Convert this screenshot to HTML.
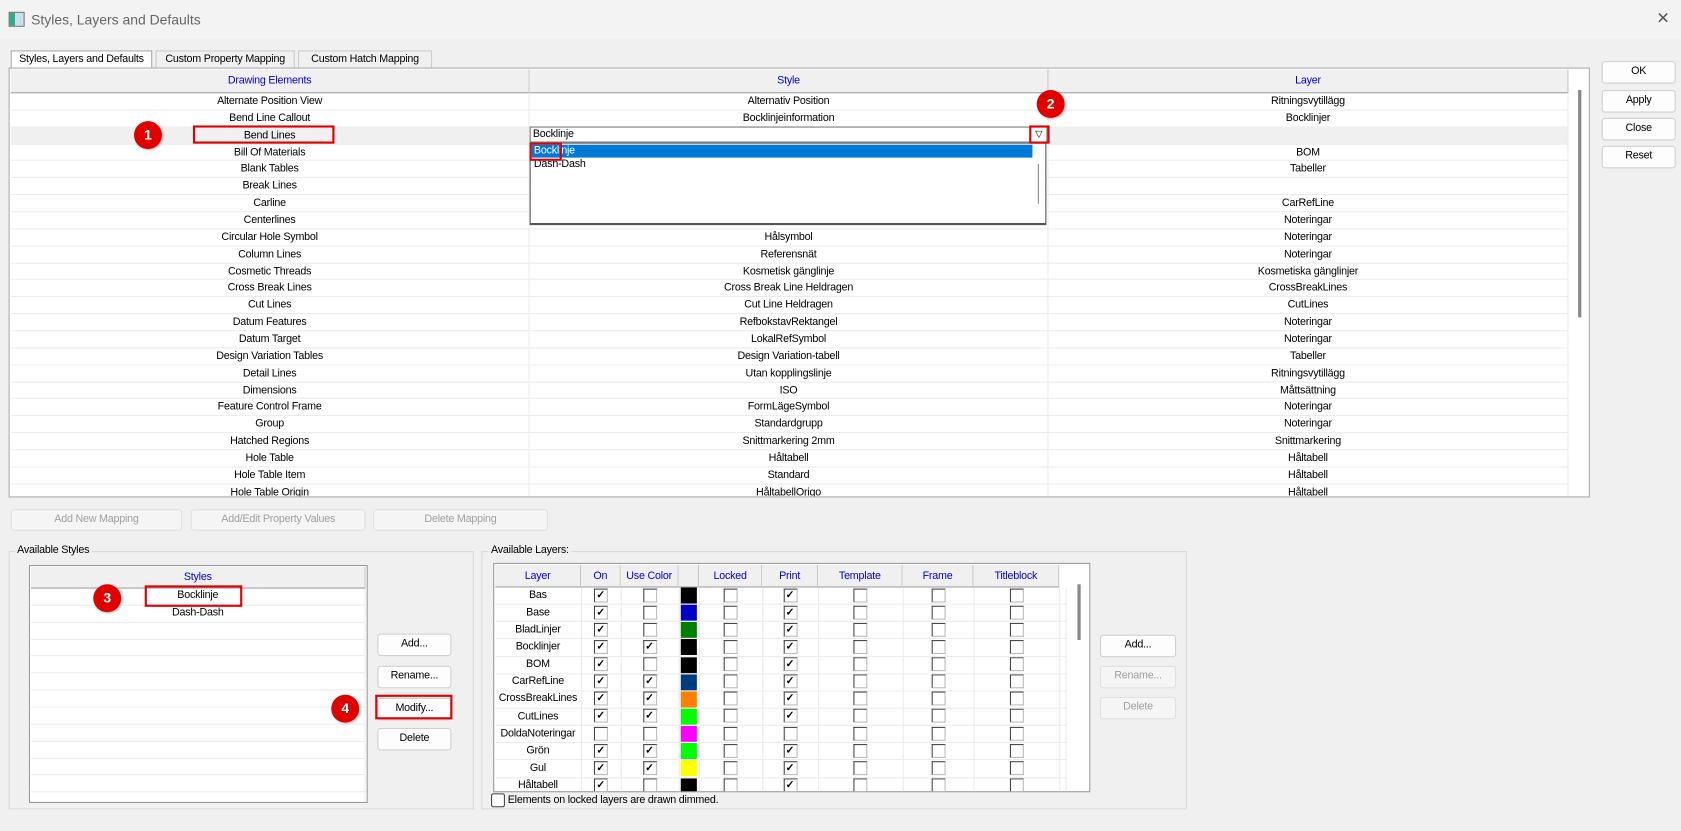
<!DOCTYPE html>
<html><head><meta charset="utf-8"><style>
html,body{margin:0;padding:0;width:1681px;height:831px;overflow:hidden;background:#f0f0f0}
#w{position:absolute;left:0;top:0;width:1568px;height:775px;transform:scale(1.0721);transform-origin:0 0;background:#f0f0f0;font-family:"Liberation Sans",sans-serif;font-size:10px;letter-spacing:-0.2px;color:#000}
.a{position:absolute}
.btn{position:absolute;background:#fdfdfd;border:1px solid #d0d0d0;border-radius:3px;text-align:center;box-sizing:border-box;line-height:18px}
.dis{color:#a0a0a0;background:#f5f5f5;border-color:#e0e0e0}
table{border-collapse:collapse;table-layout:fixed}
td{padding:0;text-align:center;white-space:nowrap;overflow:hidden;border-bottom:1px solid #ececec}
.g td{height:14.87px;line-height:14px;border-right:1px solid #ececec}
.gr{display:flex;height:15.87px;box-sizing:border-box;border-bottom:1px solid #ececec;line-height:15px}
.gr span{display:block;text-align:center;white-space:nowrap;border-right:1px solid #ececec;box-sizing:border-box}
.gr span:nth-child(1){width:484px}.gr span:nth-child(2){width:484px}.gr span:nth-child(3){width:485px}
.hd{position:absolute;background:#f0f0f0;color:#0000e0;text-align:center;border-right:1px solid #c8c8c8;border-bottom:1px solid #a0a0a0;box-sizing:border-box}
.red{position:absolute;border:2px solid #e00000;box-sizing:border-box}
.num{position:absolute;width:26px;height:26px;border-radius:50%;background:#e00000;color:#fff;font-weight:bold;font-size:13px;text-align:center;line-height:26px;box-shadow:1px 1px 2px rgba(0,0,0,.3);letter-spacing:0}
.cb{display:inline-block;width:11px;height:11px;border:1px solid #444;border-right-color:#bbb;border-bottom-color:#bbb;background:#fff;vertical-align:middle;font-size:10px;line-height:11px;text-align:center;font-weight:bold;letter-spacing:0}
.l td{height:14.87px;line-height:14px;border-right:1px solid #ececec}
.sw{display:inline-block;width:15px;height:15px;vertical-align:middle}
</style></head><body><div id="w">
<div class="a" style="left:0;top:0;width:1568px;height:36px;background:#f3f3f3"></div>
<div class="a" style="left:8px;top:11px;width:13px;height:12px;border:1px solid #777;background:linear-gradient(90deg,#3a8 0 40%,#cde 40%)"></div>
<div class="a" style="left:29px;top:11px;font-size:13px;color:#666;letter-spacing:0">Styles, Layers and Defaults</div>
<div class="a" style="left:1545px;top:8px;font-size:15px;color:#555">✕</div>
<div class="a" style="left:10px;top:47px;width:132px;height:17px;background:#fff;border:1px solid #aaa;border-bottom:none;box-sizing:border-box;text-align:center;line-height:16px">Styles, Layers and Defaults</div>
<div class="a" style="left:145px;top:47px;width:130px;height:16px;border:1px solid #ccc;border-bottom:none;box-sizing:border-box;text-align:center;line-height:16px">Custom Property Mapping</div>
<div class="a" style="left:278px;top:47px;width:125px;height:16px;border:1px solid #ccc;border-bottom:none;box-sizing:border-box;text-align:center;line-height:16px">Custom Hatch Mapping</div>
<div class="a" style="left:8px;top:63px;width:1475px;height:401px;background:#fff;border:1px solid #aaa;box-sizing:border-box;overflow:hidden">
<div class="hd" style="left:1px;top:1px;width:484px;height:22px;line-height:22px">Drawing Elements</div>
<div class="hd" style="left:485px;top:1px;width:484px;height:22px;line-height:22px">Style</div>
<div class="hd" style="left:969px;top:1px;width:485px;height:22px;line-height:22px">Layer</div>
<div class="a" style="left:1463px;top:20px;width:3px;height:212px;background:#888"></div>
<div class="a" style="left:1px;top:23px;width:1453px">
<div class="gr"><span>Alternate Position View</span><span>Alternativ Position</span><span>Ritningsvytillägg</span></div>
<div class="gr"><span>Bend Line Callout</span><span>Bocklinjeinformation</span><span>Bocklinjer</span></div>
<div class="gr" style="background:#f0f0f0"><span>Bend Lines</span><span></span><span></span></div>
<div class="gr"><span>Bill Of Materials</span><span></span><span>BOM</span></div>
<div class="gr"><span>Blank Tables</span><span></span><span>Tabeller</span></div>
<div class="gr"><span>Break Lines</span><span></span><span></span></div>
<div class="gr"><span>Carline</span><span></span><span>CarRefLine</span></div>
<div class="gr"><span>Centerlines</span><span></span><span>Noteringar</span></div>
<div class="gr"><span>Circular Hole Symbol</span><span>Hålsymbol</span><span>Noteringar</span></div>
<div class="gr"><span>Column Lines</span><span>Referensnät</span><span>Noteringar</span></div>
<div class="gr"><span>Cosmetic Threads</span><span>Kosmetisk gänglinje</span><span>Kosmetiska gänglinjer</span></div>
<div class="gr"><span>Cross Break Lines</span><span>Cross Break Line Heldragen</span><span>CrossBreakLines</span></div>
<div class="gr"><span>Cut Lines</span><span>Cut Line Heldragen</span><span>CutLines</span></div>
<div class="gr"><span>Datum Features</span><span>RefbokstavRektangel</span><span>Noteringar</span></div>
<div class="gr"><span>Datum Target</span><span>LokalRefSymbol</span><span>Noteringar</span></div>
<div class="gr"><span>Design Variation Tables</span><span>Design Variation-tabell</span><span>Tabeller</span></div>
<div class="gr"><span>Detail Lines</span><span>Utan kopplingslinje</span><span>Ritningsvytillägg</span></div>
<div class="gr"><span>Dimensions</span><span>ISO</span><span>Måttsättning</span></div>
<div class="gr"><span>Feature Control Frame</span><span>FormLägeSymbol</span><span>Noteringar</span></div>
<div class="gr"><span>Group</span><span>Standardgrupp</span><span>Noteringar</span></div>
<div class="gr"><span>Hatched Regions</span><span>Snittmarkering 2mm</span><span>Snittmarkering</span></div>
<div class="gr"><span>Hole Table</span><span>Håltabell</span><span>Håltabell</span></div>
<div class="gr"><span>Hole Table Item</span><span>Standard</span><span>Håltabell</span></div>
<div class="gr"><span>Hole Table Origin</span><span>HåltabellOrigo</span><span>Håltabell</span></div>
</div>
</div>
<div class="a" style="left:494px;top:118px;width:483px;height:15px;background:#fff;border:1px solid #777;box-sizing:border-box;line-height:13px;padding-left:2px">Bocklinje</div>
<div class="a" style="left:963px;top:119px;width:12px;height:13px;font-size:9px;line-height:13px;text-align:center">▽</div>
<div class="a" style="left:494px;top:133px;width:482px;height:77px;background:#fff;border:1px solid #555;border-bottom-width:2px;box-sizing:border-box"></div>
<div class="a" style="left:496px;top:135px;width:467px;height:12px;background:#0078d7;color:#fff;line-height:12px;padding-left:2px;box-sizing:border-box">Bocklinje</div>
<div class="a" style="left:498px;top:148px">Dash-Dash</div>
<div class="a" style="left:968px;top:153px;width:1px;height:37px;background:#888"></div>
<div class="red" style="left:180px;top:117px;width:132px;height:17px"></div>
<div class="red" style="left:494px;top:133px;width:30px;height:17px"></div>
<div class="red" style="left:960px;top:117px;width:19px;height:17px"></div>
<div class="num" style="left:125px;top:113px">1</div>
<div class="num" style="left:967px;top:84px">2</div>
<div class="btn" style="left:1494px;top:57px;width:69px;height:21px">OK</div>
<div class="btn" style="left:1494px;top:84px;width:69px;height:21px">Apply</div>
<div class="btn" style="left:1494px;top:110px;width:69px;height:21px">Close</div>
<div class="btn" style="left:1494px;top:136px;width:69px;height:21px">Reset</div>
<div class="btn dis" style="left:10px;top:475px;width:160px;height:20px">Add New Mapping</div>
<div class="btn dis" style="left:178px;top:475px;width:163px;height:20px">Add/Edit Property Values</div>
<div class="btn dis" style="left:348px;top:475px;width:163px;height:20px">Delete Mapping</div>
<div class="a" style="left:8px;top:514px;width:434px;height:241px;border:1px solid #d8d8d8;box-sizing:border-box"></div>
<div class="a" style="left:14px;top:508px;background:#f0f0f0;padding:0 2px">Available Styles</div>
<div class="a" style="left:27px;top:527px;width:316px;height:222px;background:#fff;border:1px solid #999;box-sizing:border-box;overflow:hidden">
<div class="hd" style="left:1px;top:1px;width:312px;height:20px;line-height:20px">Styles</div>
<table class="g a" style="left:1px;top:21px;width:312px">
<tr><td>Bocklinje</td></tr><tr><td>Dash-Dash</td></tr><tr><td></td></tr><tr><td></td></tr><tr><td></td></tr><tr><td></td></tr><tr><td></td></tr><tr><td></td></tr><tr><td></td></tr><tr><td></td></tr><tr><td></td></tr><tr><td></td></tr><tr><td></td></tr>
</table></div>
<div class="red" style="left:135px;top:546px;width:91px;height:20px"></div>
<div class="num" style="left:87px;top:545px">3</div>
<div class="btn" style="left:352px;top:591px;width:69px;height:21px">Add...</div>
<div class="btn" style="left:352px;top:621px;width:69px;height:21px">Rename...</div>
<div class="btn" style="left:352px;top:651px;width:69px;height:21px">Modify...</div>
<div class="btn" style="left:352px;top:679px;width:69px;height:21px">Delete</div>
<div class="red" style="left:350px;top:648px;width:72px;height:23px"></div>
<div class="num" style="left:309px;top:648px">4</div>
<div class="a" style="left:449px;top:514px;width:658px;height:241px;border:1px solid #d8d8d8;box-sizing:border-box"></div>
<div class="a" style="left:456px;top:508px;background:#f0f0f0;padding:0 2px">Available Layers:</div>
<div class="a" style="left:460px;top:525px;width:557px;height:214px;background:#fff;border:1px solid #999;box-sizing:border-box;overflow:hidden">
<div class="hd" style="left:1px;top:1px;width:80px;height:21px;line-height:21px">Layer</div>
<div class="hd" style="left:81px;top:1px;width:37px;height:21px;line-height:21px">On</div>
<div class="hd" style="left:118px;top:1px;width:54px;height:21px;line-height:21px">Use Color</div>
<div class="hd" style="left:172px;top:1px;width:19px;height:21px"></div>
<div class="hd" style="left:191px;top:1px;width:59px;height:21px;line-height:21px">Locked</div>
<div class="hd" style="left:250px;top:1px;width:52px;height:21px;line-height:21px">Print</div>
<div class="hd" style="left:302px;top:1px;width:79px;height:21px;line-height:21px">Template</div>
<div class="hd" style="left:381px;top:1px;width:66px;height:21px;line-height:21px">Frame</div>
<div class="hd" style="left:447px;top:1px;width:80px;height:21px;line-height:21px">Titleblock</div>
<div class="a" style="left:544px;top:19px;width:3px;height:52px;background:#888"></div>
<table class="l a" style="left:1px;top:22px;width:532px">
<colgroup><col style="width:80px"><col style="width:37px"><col style="width:54px"><col style="width:19px"><col style="width:59px"><col style="width:52px"><col style="width:79px"><col style="width:66px"><col style="width:80px"><col style="width:6px"></colgroup>
<tr><td>Bas</td><td><span class="cb">✓</span></td><td><span class="cb"></span></td><td><span class="sw" style="background:#000"></span></td><td><span class="cb"></span></td><td><span class="cb">✓</span></td><td><span class="cb"></span></td><td><span class="cb"></span></td><td><span class="cb"></span></td><td></td></tr>
<tr><td>Base</td><td><span class="cb">✓</span></td><td><span class="cb"></span></td><td><span class="sw" style="background:#0000c8"></span></td><td><span class="cb"></span></td><td><span class="cb">✓</span></td><td><span class="cb"></span></td><td><span class="cb"></span></td><td><span class="cb"></span></td><td></td></tr>
<tr><td>BladLinjer</td><td><span class="cb">✓</span></td><td><span class="cb"></span></td><td><span class="sw" style="background:#008000"></span></td><td><span class="cb"></span></td><td><span class="cb">✓</span></td><td><span class="cb"></span></td><td><span class="cb"></span></td><td><span class="cb"></span></td><td></td></tr>
<tr><td>Bocklinjer</td><td><span class="cb">✓</span></td><td><span class="cb">✓</span></td><td><span class="sw" style="background:#000"></span></td><td><span class="cb"></span></td><td><span class="cb">✓</span></td><td><span class="cb"></span></td><td><span class="cb"></span></td><td><span class="cb"></span></td><td></td></tr>
<tr><td>BOM</td><td><span class="cb">✓</span></td><td><span class="cb"></span></td><td><span class="sw" style="background:#000"></span></td><td><span class="cb"></span></td><td><span class="cb">✓</span></td><td><span class="cb"></span></td><td><span class="cb"></span></td><td><span class="cb"></span></td><td></td></tr>
<tr><td>CarRefLine</td><td><span class="cb">✓</span></td><td><span class="cb">✓</span></td><td><span class="sw" style="background:#003c7c"></span></td><td><span class="cb"></span></td><td><span class="cb">✓</span></td><td><span class="cb"></span></td><td><span class="cb"></span></td><td><span class="cb"></span></td><td></td></tr>
<tr><td>CrossBreakLines</td><td><span class="cb">✓</span></td><td><span class="cb">✓</span></td><td><span class="sw" style="background:#ff8000"></span></td><td><span class="cb"></span></td><td><span class="cb">✓</span></td><td><span class="cb"></span></td><td><span class="cb"></span></td><td><span class="cb"></span></td><td></td></tr>
<tr><td>CutLines</td><td><span class="cb">✓</span></td><td><span class="cb">✓</span></td><td><span class="sw" style="background:#00ff00"></span></td><td><span class="cb"></span></td><td><span class="cb">✓</span></td><td><span class="cb"></span></td><td><span class="cb"></span></td><td><span class="cb"></span></td><td></td></tr>
<tr><td>DoldaNoteringar</td><td><span class="cb"></span></td><td><span class="cb"></span></td><td><span class="sw" style="background:#ff00ff"></span></td><td><span class="cb"></span></td><td><span class="cb"></span></td><td><span class="cb"></span></td><td><span class="cb"></span></td><td><span class="cb"></span></td><td></td></tr>
<tr><td>Grön</td><td><span class="cb">✓</span></td><td><span class="cb">✓</span></td><td><span class="sw" style="background:#00ff00"></span></td><td><span class="cb"></span></td><td><span class="cb">✓</span></td><td><span class="cb"></span></td><td><span class="cb"></span></td><td><span class="cb"></span></td><td></td></tr>
<tr><td>Gul</td><td><span class="cb">✓</span></td><td><span class="cb">✓</span></td><td><span class="sw" style="background:#ffff00"></span></td><td><span class="cb"></span></td><td><span class="cb">✓</span></td><td><span class="cb"></span></td><td><span class="cb"></span></td><td><span class="cb"></span></td><td></td></tr>
<tr><td>Håltabell</td><td><span class="cb">✓</span></td><td><span class="cb"></span></td><td><span class="sw" style="background:#000"></span></td><td><span class="cb"></span></td><td><span class="cb">✓</span></td><td><span class="cb"></span></td><td><span class="cb"></span></td><td><span class="cb"></span></td><td></td></tr>
</table></div>
<div class="a" style="left:458px;top:740px"><span class="cb" style="border-radius:2px;border-color:#444"></span> Elements on locked layers are drawn dimmed.</div>
<div class="btn" style="left:1026px;top:592px;width:71px;height:21px">Add...</div>
<div class="btn dis" style="left:1026px;top:621px;width:71px;height:21px">Rename...</div>
<div class="btn dis" style="left:1026px;top:650px;width:71px;height:21px">Delete</div>
</div></body></html>
